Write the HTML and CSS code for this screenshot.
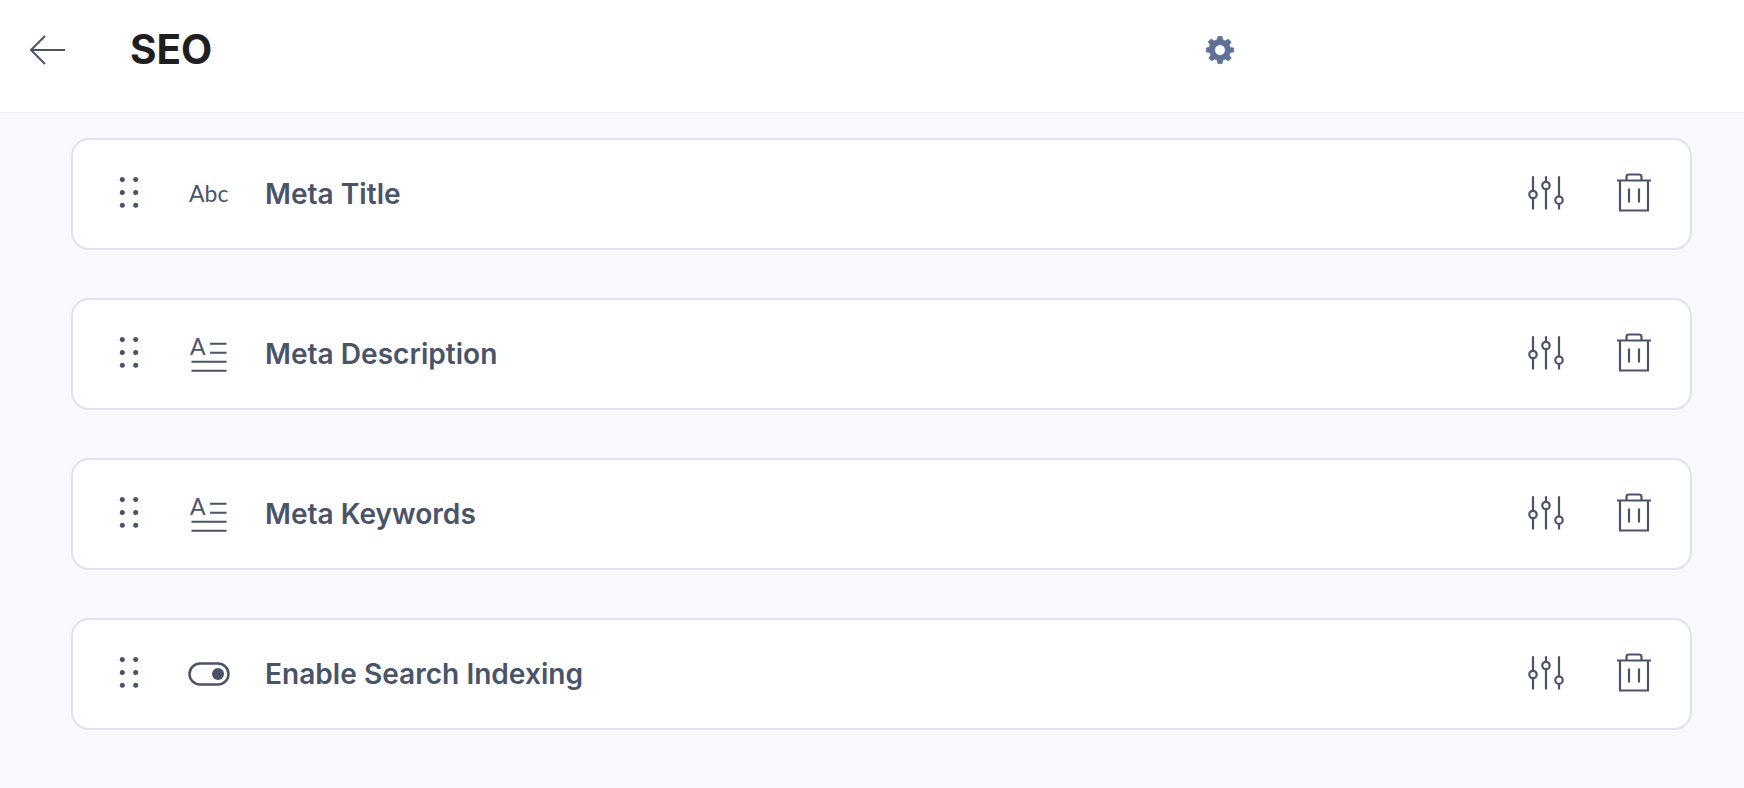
FILE: index.html
```html
<!DOCTYPE html>
<html lang="en">
<head>
<meta charset="utf-8">
<title>SEO</title>
<link rel="stylesheet" href="styles.css">
</head>
<body>
<svg class="defs" width="0" height="0" aria-hidden="true">
  <defs>
    <g id="drag"><circle cx="2.3" cy="1.500" r="2.500"/><circle cx="15.700" cy="1.500" r="2.500"/><circle cx="2.300" cy="14.500" r="2.500"/><circle cx="15.700" cy="14.500" r="2.500"/><circle cx="2.300" cy="27.200" r="2.500"/><circle cx="15.700" cy="27.200" r="2.500"/></g>
    <g id="sliders"><path d="M5 1.200v14.600M5 23.200v11.300M18 1.200v5.600M18 14.200v20.300M31 1.200v20.300M31 28.900v5.600"/><circle cx="5" cy="19.500" r="3.700"/><circle cx="18" cy="10.500" r="3.700"/><circle cx="31" cy="25.200" r="3.700"/></g>
    <g id="trash"><path d="M1 7h34M4 7v30h28V7M10.500 7V3.500Q10.500 1 13 1h10Q25.500 1 25.500 3.500V7M13 15v14M23 15v14"/></g>
  </defs>
</svg>
<header class="topbar">
  <button class="back" aria-label="Back">
    <svg width="38" height="30" viewBox="0 0 38 30"><path d="M36 15H2M16 1 2 15l14 14"/></svg>
  </button>
  <h1 class="title">SEO</h1>
  <svg class="gear" width="30" height="30" viewBox="0 0 20 20"><path fill-rule="evenodd" d="M11.500.900l.5 2.400 1.500.6 2-1.300 2 2-1.300 2 .6 1.500 2.400.5v2.800l-2.400.5-.6 1.500 1.300 2-2 2-2-1.300-1.500.6-.5 2.400H8.500L8 16.700l-1.500-.6-2 1.300-2-2 1.300-2-.6-1.500-2.400-.5V8.600L2.700 8l.6-1.500-1.300-2 2-2 2 1.300L8 3.200 8.500.900zM10 6.500a3.500 3.500 0 1 0 0 7 3.500 3.500 0 0 0 0-7z"/></svg>
</header>
<main class="list">
  <section class="card">
    <svg class="drag" width="19" height="31" viewBox="0 1 19 31"><use href="#drag"/></svg>
    <span class="type-icon abc">Abc</span>
    <span class="label">Meta Title</span>
    <svg class="action sliders" width="36" height="36" viewBox="0 1 36 36"><use href="#sliders"/></svg>
    <svg class="action trash" width="36" height="38" viewBox="0 1.500 36 38"><use href="#trash"/></svg>
  </section>
  <section class="card">
    <svg class="drag" width="19" height="31" viewBox="0 1 19 31"><use href="#drag"/></svg>
    <span class="type-icon para"><span class="para-a">A</span><svg width="38" height="36" viewBox="0 0 38 36"><path d="M20 7.800h16.500M20 16.800h16.500M1.500 25.800h35M1.500 34.800h35"/></svg></span>
    <span class="label">Meta Description</span>
    <svg class="action sliders" width="36" height="36" viewBox="0 1 36 36"><use href="#sliders"/></svg>
    <svg class="action trash" width="36" height="38" viewBox="0 1.500 36 38"><use href="#trash"/></svg>
  </section>
  <section class="card">
    <svg class="drag" width="19" height="31" viewBox="0 1 19 31"><use href="#drag"/></svg>
    <span class="type-icon para"><span class="para-a">A</span><svg width="38" height="36" viewBox="0 0 38 36"><path d="M20 7.800h16.500M20 16.800h16.500M1.500 25.800h35M1.500 34.800h35"/></svg></span>
    <span class="label">Meta Keywords</span>
    <svg class="action sliders" width="36" height="36" viewBox="0 1 36 36"><use href="#sliders"/></svg>
    <svg class="action trash" width="36" height="38" viewBox="0 1.500 36 38"><use href="#trash"/></svg>
  </section>
  <section class="card">
    <svg class="drag" width="19" height="31" viewBox="0 1 19 31"><use href="#drag"/></svg>
    <svg class="type-icon toggle" width="42" height="24" viewBox="0 0 42 24"><rect x="1.500" y="1.500" width="39" height="21" rx="10.500"/><circle cx="30" cy="12" r="6"/></svg>
    <span class="label">Enable Search Indexing</span>
    <svg class="action sliders" width="36" height="36" viewBox="0 1 36 36"><use href="#sliders"/></svg>
    <svg class="action trash" width="36" height="38" viewBox="0 1.500 36 38"><use href="#trash"/></svg>
  </section>
</main>
</body>
</html>
```
FILE: styles.css
```css
* { box-sizing: border-box; }
html, body { margin: 0; height: 100%; }
body {
  background: #f8f9fd;
  font-family: Inter, "Liberation Sans", sans-serif;
  overflow: hidden;
}
.defs { display: block; height: 0; }
.topbar {
  display: flex;
  align-items: center;
  height: 113px;
  padding: 0 0 12px 29px;
  background: #fff;
  border-bottom: 1px solid #eef0f6;
}
.back {
  display: flex;
  width: 38px;
  padding: 0;
  border: 0;
  background: none;
}
.back svg { fill: none; stroke: #4a5469; stroke-width: 2; }
.title {
  margin: 0 0 0 63px;
  width: 1075px;
  font-size: 40.500px;
  font-weight: 700;
  line-height: 1;
  color: #1f1f1f;
}
.gear {
  fill: #5f7196;
  stroke: #5f7196;
  stroke-width: .3;
  stroke-linejoin: round;
}
.list {
  display: flex;
  flex-direction: column;
  gap: 48px;
  padding: 25px 52px 0 71px;
}
.card {
  display: flex;
  align-items: center;
  height: 112px;
  padding: 0 38px 0 47px;
  background: #fff;
  border: 2px solid #dee3f0;
  border-radius: 18px;
}
.drag { fill: #4a5469; flex: none; overflow: visible; }
.type-icon { flex: none; margin-left: 49px; width: 42px; }
.abc {
  padding: 0 0 2px 1px;
  font-family: Lato, sans-serif;
  font-size: 23px;
  color: #4a5469;
  white-space: nowrap;
}
.para { position: relative; display: flex; padding-left: 2px; }
.para svg { fill: none; stroke: #4a5469; stroke-width: 2; }
.para-a {
  position: absolute;
  left: 2px;
  top: -2px;
  font-family: Lato, sans-serif;
  font-size: 23px;
  line-height: 24px;
  color: #4a5469;
}
.toggle { fill: none; stroke: #4a5469; stroke-width: 2.500; }
.toggle circle { fill: #4a5469; stroke: none; }
.label {
  flex: 1;
  margin-left: 35px;
  font-size: 28.100px;
  font-weight: 600;
  color: #4a5469;
}
.action { flex: none; fill: none; stroke: #4a5469; stroke-width: 2.200; overflow: visible; }
.trash { margin-left: 52px; }
```
